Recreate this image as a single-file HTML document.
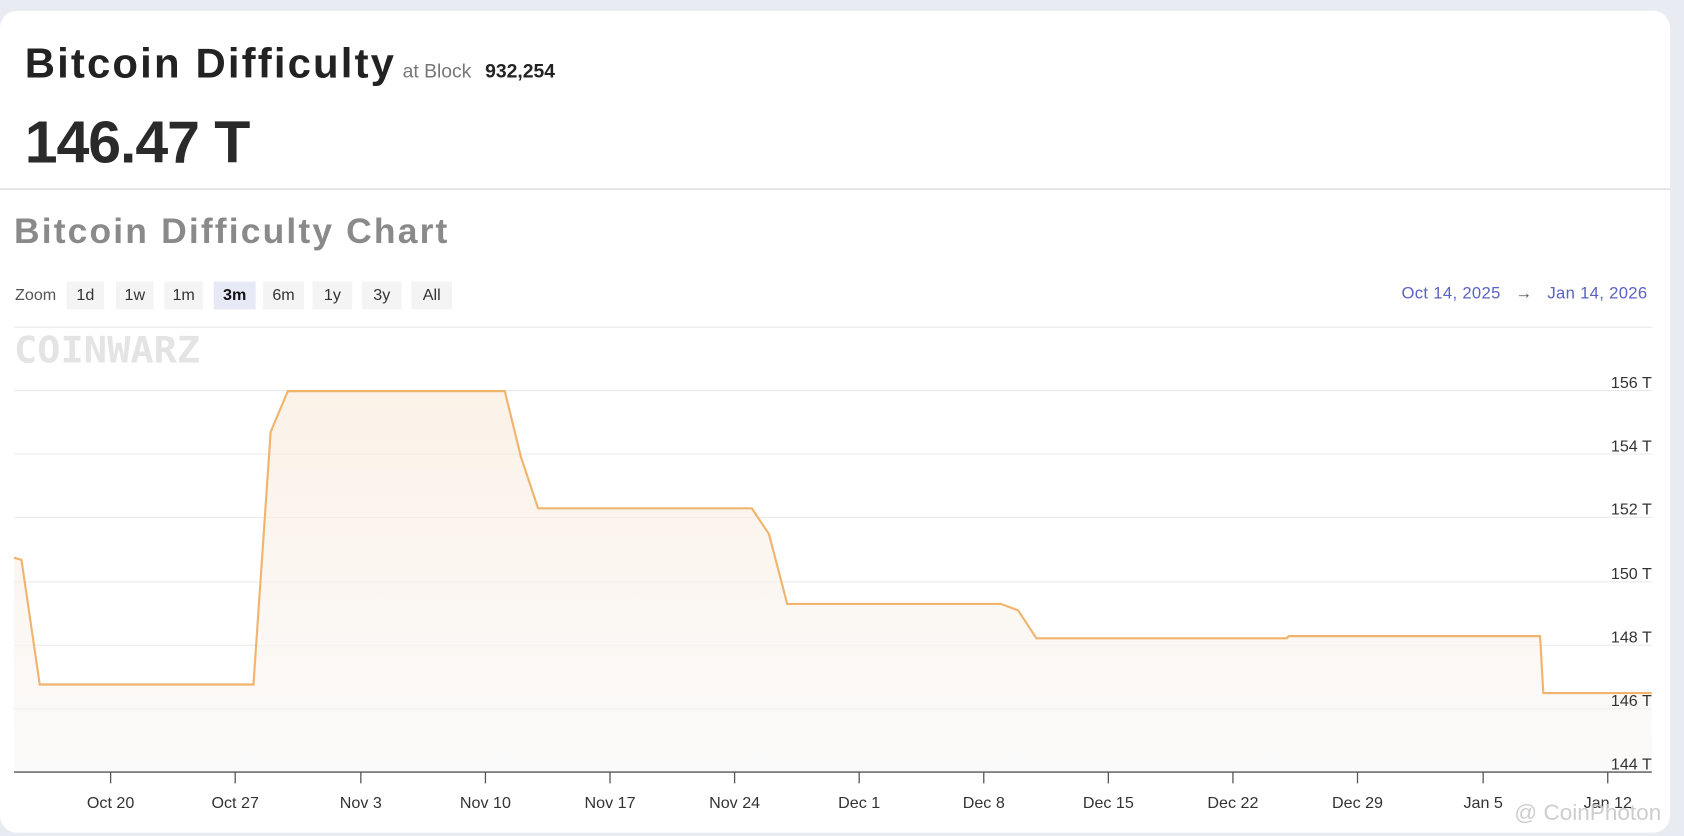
<!DOCTYPE html>
<html><head><meta charset="utf-8"><style>
html,body{margin:0;padding:0;background:#e9ebf2;overflow:hidden}
#w{width:1568px;height:778px;transform:scale(1.07398,1.07455);transform-origin:0 0;position:relative;font-family:"Liberation Sans",sans-serif}
.card{position:absolute;left:0;top:10px;width:1555px;height:765px;background:#fff;border-radius:16px}
.t{position:absolute;white-space:nowrap}
.btn{position:absolute;top:262px;height:26px;background:#f4f4f5;font-size:15px;color:#333;text-align:center;line-height:26px}
</style></head><body><div id="w">
<div class="card"></div>
<div class="t" style="left:23px;top:38px;font-size:39px;font-weight:bold;color:#222;letter-spacing:2px">Bitcoin Difficulty<span style="font-size:18px;font-weight:normal;color:#777;letter-spacing:0;margin-left:6px">at Block</span> <span style="font-size:18px;color:#222;letter-spacing:0">932,254</span></div>
<div class="t" style="left:23px;top:100px;font-size:55px;font-weight:bold;color:#2a2a2a;letter-spacing:-1px">146.47 T</div>
<div style="position:absolute;left:0;top:175px;width:1555px;height:2px;background:#e6e6e8"></div>
<div class="t" style="left:13px;top:196px;font-size:33px;font-weight:bold;color:#8a8a8a;letter-spacing:2px">Bitcoin Difficulty Chart</div>
<div class="t" style="left:14px;top:266px;font-size:15px;color:#555">Zoom</div>
<div class="btn" style="left:62px;width:35px">1d</div>
<div class="btn" style="left:108px;width:35px">1w</div>
<div class="btn" style="left:153px;width:36px">1m</div>
<div class="btn" style="left:199px;width:39px;background:#e7eaf6;font-weight:bold;color:#111">3m</div>
<div class="btn" style="left:245px;width:38px">6m</div>
<div class="btn" style="left:291px;width:37px">1y</div>
<div class="btn" style="left:337px;width:37px">3y</div>
<div class="btn" style="left:383px;width:38px">All</div>
<div class="t" style="right:34px;top:265px;font-size:15.5px;color:#5a62c4;letter-spacing:0.3px">Oct 14, 2025 &nbsp;&nbsp;<span style="color:#555">→</span>&nbsp;&nbsp; Jan 14, 2026</div>
<div class="t" style="left:13px;top:306px;font-size:36px;font-weight:bold;color:#e4e4e4;font-family:'DejaVu Sans Mono',monospace;letter-spacing:0px;transform:scaleY(0.95)">COINWARZ</div>
<svg style="position:absolute;left:0;top:0" width="1568" height="778">
<defs><linearGradient id="g" x1="0" y1="0" x2="0" y2="1"><stop offset="0" stop-color="#f8ead8" stop-opacity=".6"/><stop offset="1" stop-color="#f8f7f7" stop-opacity=".6"/></linearGradient></defs>
<g stroke="#e8e8ea" stroke-width="1"><line x1="13" y1="304.5" x2="1538" y2="304.5"/><line x1="13" y1="363.5" x2="1538" y2="363.5"/><line x1="13" y1="422.5" x2="1538" y2="422.5"/><line x1="13" y1="481.5" x2="1538" y2="481.5"/><line x1="13" y1="541.5" x2="1538" y2="541.5"/><line x1="13" y1="600.5" x2="1538" y2="600.5"/><line x1="13" y1="659.5" x2="1538" y2="659.5"/></g>
<path d="M13,519 L20,521 L37,637 L236,637 L252,402 L268,364 L470,364 L485,425 L501,473 L700,473 L716,497 L733,562 L932,562 L948,568 L965,594 L1198,594 L1200,592 L1434,592 L1437,645 L1538,645 L1538,718 L13,718Z" fill="url(#g)"/>
<path d="M13,519 L20,521 L37,637 L236,637 L252,402 L268,364 L470,364 L485,425 L501,473 L700,473 L716,497 L733,562 L932,562 L948,568 L965,594 L1198,594 L1200,592 L1434,592 L1437,645 L1538,645" fill="none" stroke="#f1b46c" stroke-width="2"/>
<line x1="13" y1="718.5" x2="1538" y2="718.5" stroke="#555" stroke-width="1.2"/>
<g stroke="#555" stroke-width="1.2"><line x1="103" y1="718" x2="103" y2="729"/><line x1="219" y1="718" x2="219" y2="729"/><line x1="336" y1="718" x2="336" y2="729"/><line x1="452" y1="718" x2="452" y2="729"/><line x1="568" y1="718" x2="568" y2="729"/><line x1="684" y1="718" x2="684" y2="729"/><line x1="800" y1="718" x2="800" y2="729"/><line x1="916" y1="718" x2="916" y2="729"/><line x1="1032" y1="718" x2="1032" y2="729"/><line x1="1148" y1="718" x2="1148" y2="729"/><line x1="1264" y1="718" x2="1264" y2="729"/><line x1="1381" y1="718" x2="1381" y2="729"/><line x1="1497" y1="718" x2="1497" y2="729"/></g>
<g font-family="Liberation Sans,sans-serif" font-size="15" fill="#333" text-anchor="end"><text x="1538" y="361">156 T</text><text x="1538" y="420">154 T</text><text x="1538" y="479">152 T</text><text x="1538" y="539">150 T</text><text x="1538" y="598">148 T</text><text x="1538" y="657">146 T</text><text x="1538" y="716">144 T</text></g>
<g font-family="Liberation Sans,sans-serif" font-size="15" fill="#333" text-anchor="middle"><text x="103" y="752">Oct 20</text><text x="219" y="752">Oct 27</text><text x="336" y="752">Nov 3</text><text x="452" y="752">Nov 10</text><text x="568" y="752">Nov 17</text><text x="684" y="752">Nov 24</text><text x="800" y="752">Dec 1</text><text x="916" y="752">Dec 8</text><text x="1032" y="752">Dec 15</text><text x="1148" y="752">Dec 22</text><text x="1264" y="752">Dec 29</text><text x="1381" y="752">Jan 5</text><text x="1497" y="752">Jan 12</text></g>
<text x="1410" y="763" font-family="Liberation Sans,sans-serif" font-size="21" fill="#c8c8c8" opacity=".9">@ CoinPhoton</text>
</svg>
</div></body></html>
